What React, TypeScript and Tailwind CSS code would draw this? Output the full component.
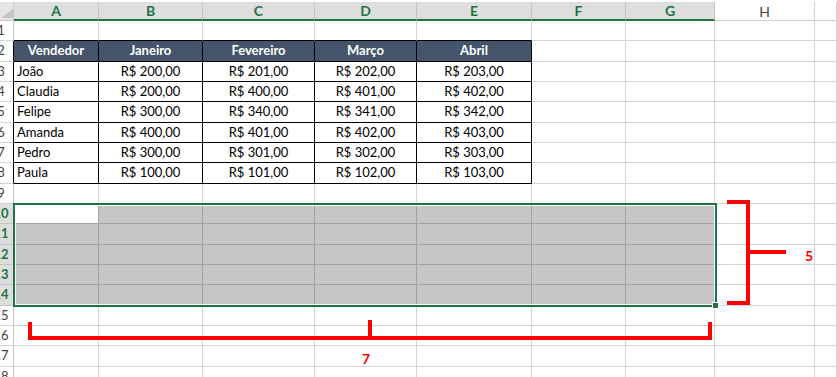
import * as React from 'react';

// Planilha estilo Excel com seleção A10:G14 e marcações em vermelho
const cols = [
  { k: 'A', w: 85 },
  { k: 'B', w: 104 },
  { k: 'C', w: 112 },
  { k: 'D', w: 102 },
  { k: 'E', w: 115 },
  { k: 'F', w: 94 },
  { k: 'G', w: 89 },
  { k: 'H', w: 100 },
  { k: '', w: 22 },
];

const rowHeights = [20, 21, 20, 20, 21, 20, 20, 21, 20, 20, 21, 20, 20, 21, 20, 20, 21, 20];

const table: string[][] = [
  ['Vendedor', 'Janeiro', 'Fevereiro', 'Março', 'Abril'],
  ['João', 'R$ 200,00', 'R$ 201,00', 'R$ 202,00', 'R$ 203,00'],
  ['Claudia', 'R$ 200,00', 'R$ 400,00', 'R$ 401,00', 'R$ 402,00'],
  ['Felipe', 'R$ 300,00', 'R$ 340,00', 'R$ 341,00', 'R$ 342,00'],
  ['Amanda', 'R$ 400,00', 'R$ 401,00', 'R$ 402,00', 'R$ 403,00'],
  ['Pedro', 'R$ 300,00', 'R$ 301,00', 'R$ 302,00', 'R$ 303,00'],
  ['Paula', 'R$ 100,00', 'R$ 101,00', 'R$ 102,00', 'R$ 103,00'],
];

function Cell({ row, col, w }: { row: number; col: number; w: number }) {
  const inTable = row >= 2 && row <= 8 && col <= 4;
  const isHead = row === 2 && col <= 4;
  const inSel = row >= 10 && row <= 14 && col <= 6;
  const active = row === 10 && col === 0;
  const text = inTable ? table[row - 2][col] : '';

  let cls = 'h-full shrink-0 border-r border-b flex items-center overflow-hidden whitespace-nowrap ';
  if (inTable) cls += 'border-black ';
  else if (row === 1 && col <= 4) cls += 'border-r-[#d4d4d4] border-b-black ';
  else if (inSel) cls += 'border-[#a2a2a2] ';
  else cls += 'border-[#d4d4d4] ';

  if (isHead) cls += 'bg-[#44546a] text-white font-bold justify-center ';
  else if (inSel && !active) cls += 'bg-[#c6c6c6] ';
  else cls += 'bg-white ';

  if (inTable && !isHead) cls += col === 0 ? 'justify-start pl-[3px] text-black ' : 'justify-center text-black ';

  return (
    <div className={cls} style={{ width: w }}>
      {text}
    </div>
  );
}

export default function App() {
  return (
    <div
      className="relative w-[837px] h-[377px] overflow-hidden bg-white text-[13px]"
      style={{ fontFamily: 'Lato, "Open Sans", sans-serif' }}
    >
      {/* Cabeçalho de colunas */}
      <div className="flex h-[21px] pt-[2px] bg-white">
        <div className="w-[14px] shrink-0 h-full bg-[#e6e6e6] border-r border-b border-[#c8c8c8] relative">
          <svg width="12" height="9" className="absolute left-[1px] bottom-[2px]">
            <polygon points="12,0 12,9 0,9" fill="#c3c3c3" />
          </svg>
        </div>
        {cols.map((c, i) =>
          i <= 6 ? (
            <div
              key={c.k}
              className="shrink-0 h-full flex items-center justify-center bg-[#dedede] border-r border-r-[#c4c4c4] border-b-2 border-b-[#217346] text-[#217346] font-bold text-[14px]"
              style={{ width: c.w }}
            >
              {c.k}
            </div>
          ) : (
            <div
              key={i}
              className="shrink-0 h-full flex items-center justify-center bg-white border-r border-b border-[#cfcfcf] text-[#444] text-[14px]"
              style={{ width: c.w }}
            >
              {c.k}
            </div>
          ),
        )}
      </div>

      {/* Linhas */}
      {rowHeights.map((h, r) => {
        const row = r + 1;
        const sel = row >= 10 && row <= 14;
        const tableRow = row >= 2 && row <= 8;
        return (
          <div key={row} className="flex" style={{ height: h }}>
            <div
              className={`w-[14px] shrink-0 h-full overflow-hidden border-b border-r ${
                sel
                  ? 'bg-[#dedede] text-[#217346] font-bold border-b-[#c4c4c4] border-r-[#217346]'
                  : 'bg-white text-[#444] border-b-[#d4d4d4] ' + (tableRow ? 'border-r-black' : 'border-r-[#c8c8c8]')
              }`}
            >
              <div className="w-[26px] ml-[-12px] h-full flex items-center justify-center">{row}</div>
            </div>
            {cols.map((c, i) => (
              <Cell key={i} row={row} col={i} w={c.w} />
            ))}
          </div>
        );
      })}

      {/* Seleção A10:G14 */}
      <div className="absolute left-[13px] top-[203px] w-[704px] h-[104px] border-2 border-[#217346] shadow-[inset_0_0_0_1px_#ffffff] pointer-events-none" />
      <div className="absolute left-[712px] top-[302px] w-[7px] h-[7px] bg-[#217346] border border-white" />

      {/* Chave vertical (5 linhas) */}
      <div className="absolute left-[727px] top-[200px] w-[23px] h-[4px] bg-[#ff0000]" />
      <div className="absolute left-[746px] top-[200px] w-[4px] h-[105px] bg-[#ff0000]" />
      <div className="absolute left-[727px] top-[301px] w-[23px] h-[4px] bg-[#ff0000]" />
      <div className="absolute left-[746px] top-[250px] w-[40px] h-[4px] bg-[#ff0000]" />
      <div className="absolute left-[805px] top-[247px] text-[14px] font-bold text-[#ff0000] leading-none pt-[2px]">5</div>

      {/* Chave horizontal (7 colunas) */}
      <div className="absolute left-[28px] top-[322px] w-[4px] h-[18px] bg-[#ff0000]" />
      <div className="absolute left-[28px] top-[336px] w-[684px] h-[4px] bg-[#ff0000]" />
      <div className="absolute left-[368px] top-[320px] w-[4px] h-[18px] bg-[#ff0000]" />
      <div className="absolute left-[708px] top-[322px] w-[4px] h-[18px] bg-[#ff0000]" />
      <div className="absolute left-[362px] top-[350px] text-[14px] font-bold text-[#ff0000] leading-none pt-[2px]">7</div>
    </div>
  );
}
